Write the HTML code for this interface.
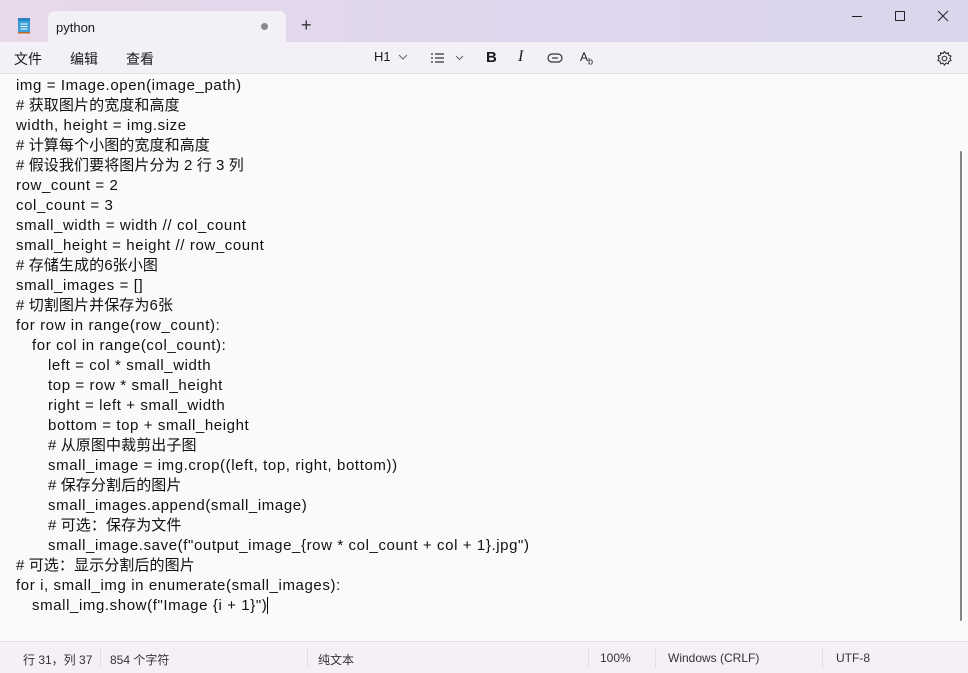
<!DOCTYPE html><html><head><meta charset="utf-8"><style>
*{margin:0;padding:0;box-sizing:border-box}
body{width:968px;height:673px;overflow:hidden;background:#fafafa;font-family:"Liberation Sans","Noto Sans CJK SC",sans-serif;position:relative;color:#1a1a1a}
.title{position:absolute;left:0;top:0;width:968px;height:42px;background:linear-gradient(90deg,#e8d8ea,#ddd6ec 60%,#dcd6ec)}
.tab{position:absolute;left:48px;top:11px;width:238px;height:31px;background:#f4f0f7;border-radius:7px 7px 0 0;font-size:13px;padding:9px 0 0 8px}
.tool{position:absolute;left:0;top:42px;width:968px;height:32px;background:#f4f0f7;border-bottom:1px solid #e4e0e8;font-size:14px}
.tool span{position:absolute;top:7px}
.ed{position:absolute;left:16px;top:76px;font-size:15px;line-height:20px;color:#111}
.ed div{letter-spacing:0.6px;height:20px;white-space:pre}
.ed div.c{letter-spacing:0.1px}
.i1{padding-left:16px}.i2{padding-left:32px}
.status{position:absolute;left:0;top:641px;width:968px;height:32px;background:#f6eff6;border-top:1px solid #e6e0e6;font-size:12px;color:#333}
.status span{position:absolute;top:9px}
.sep{position:absolute;top:6px;width:1px;height:20px;background:#e3dde3}
</style></head><body>
<div class="title"></div>
<svg style="position:absolute;left:17px;top:16px" width="14" height="18"><rect x="1" y="2" width="12" height="15" rx="1.5" fill="#3aa0d8"/><rect x="1" y="2" width="12" height="3" fill="#2b84c0"/><g stroke="#fff" stroke-width="1"><line x1="3.5" y1="8" x2="10.5" y2="8"/><line x1="3.5" y1="10.5" x2="10.5" y2="10.5"/><line x1="3.5" y1="13" x2="10.5" y2="13"/></g><rect x="1" y="16" width="12" height="1.5" fill="#b86a2a"/></svg>
<div class="tab">python<span style="position:absolute;left:213px;top:12px;width:7px;height:7px;border-radius:50%;background:#8a8a8a"></span></div>
<div style="position:absolute;left:301px;top:15px;font-size:18px;color:#333">+</div>
<svg style="position:absolute;left:840px;top:8px" width="120" height="16" stroke="#222" fill="none" stroke-width="1"><line x1="12" y1="8.5" x2="22" y2="8.5"/><rect x="55.5" y="3.5" width="9" height="9"/><path d="M98 3l10 10M108 3l-10 10"/></svg>
<div class="tool">
<span style="left:14px">文件</span><span style="left:70px">编辑</span><span style="left:126px">查看</span>
<span style="left:374px;font-size:13px">H1</span>
<svg style="position:absolute;left:398px;top:12px" width="10" height="6" fill="none" stroke="#666"><path d="M1 1l4 4 4-4"/></svg>
<svg style="position:absolute;left:430px;top:10px" width="36" height="12" stroke="#333" stroke-width="1.3"><path d="M1 2h2M1 6h2M1 10h2M5 2h9M5 6h9M5 10h9"/><path d="M26 4l3.5 3.5L33 4" fill="none" stroke="#666" stroke-width="1"/></svg>
<span style="left:486px;font-weight:bold;font-size:15px;top:7px">B</span>
<span style="left:518px;font-style:italic;font-size:16px;top:6px;font-family:'Liberation Serif'">I</span>
<svg style="position:absolute;left:547px;top:10px" width="16" height="12" fill="none" stroke="#333" stroke-width="1.2"><rect x="1" y="2" width="14" height="8" rx="4"/><line x1="5" y1="6" x2="11" y2="6"/></svg>
<span style="left:580px;font-size:12px;top:8px">A<sub style="font-size:9px">b</sub></span>
<svg style="position:absolute;left:936px;top:8px" width="17" height="17" fill="none" stroke="#333" stroke-width="1.1"><circle cx="8.5" cy="8.5" r="2.3"/><path d="M8.5 1.5l1.5 2 2.3-.7.4 2.4 2.3.9-1.1 2.2 1.1 2.2-2.3.9-.4 2.4-2.3-.7-1.5 2-1.5-2-2.3.7-.4-2.4-2.3-.9 1.1-2.2-1.1-2.2 2.3-.9.4-2.4 2.3.7z"/></svg>
</div>
<div class="ed"><div>img = Image.open(image_path)</div><div class="c"># 获取图片的宽度和高度</div><div>width, height = img.size</div><div class="c"># 计算每个小图的宽度和高度</div><div class="c"># 假设我们要将图片分为 2 行 3 列</div><div>row_count = 2</div><div>col_count = 3</div><div>small_width = width // col_count</div><div>small_height = height // row_count</div><div class="c"># 存储生成的6张小图</div><div>small_images = []</div><div class="c"># 切割图片并保存为6张</div><div>for row in range(row_count):</div><div class="i1">for col in range(col_count):</div><div class="i2">left = col * small_width</div><div class="i2">top = row * small_height</div><div class="i2">right = left + small_width</div><div class="i2">bottom = top + small_height</div><div class="i2 c"># 从原图中裁剪出子图</div><div class="i2">small_image = img.crop((left, top, right, bottom))</div><div class="i2 c"># 保存分割后的图片</div><div class="i2">small_images.append(small_image)</div><div class="i2 c"># 可选：保存为文件</div><div class="i2">small_image.save(f"output_image_{row * col_count + col + 1}.jpg")</div><div class="c"># 可选：显示分割后的图片</div><div>for i, small_img in enumerate(small_images):</div><div class="i1">small_img.show(f"Image {i + 1}")<span style="border-left:1px solid #000"></span></div></div>
<div style="position:absolute;left:960px;top:151px;width:2px;height:470px;background:#858585;border-radius:1px"></div>
<div class="status">
<span style="left:23px">行 31，列 37</span><div class="sep" style="left:100px"></div><span style="left:110px">854 个字符</span>
<div class="sep" style="left:307px"></div><span style="left:318px">纯文本</span>
<div class="sep" style="left:588px"></div><span style="left:600px">100%</span>
<div class="sep" style="left:655px"></div><span style="left:668px">Windows (CRLF)</span>
<div class="sep" style="left:822px"></div><span style="left:836px">UTF-8</span>
</div>
</body></html>
